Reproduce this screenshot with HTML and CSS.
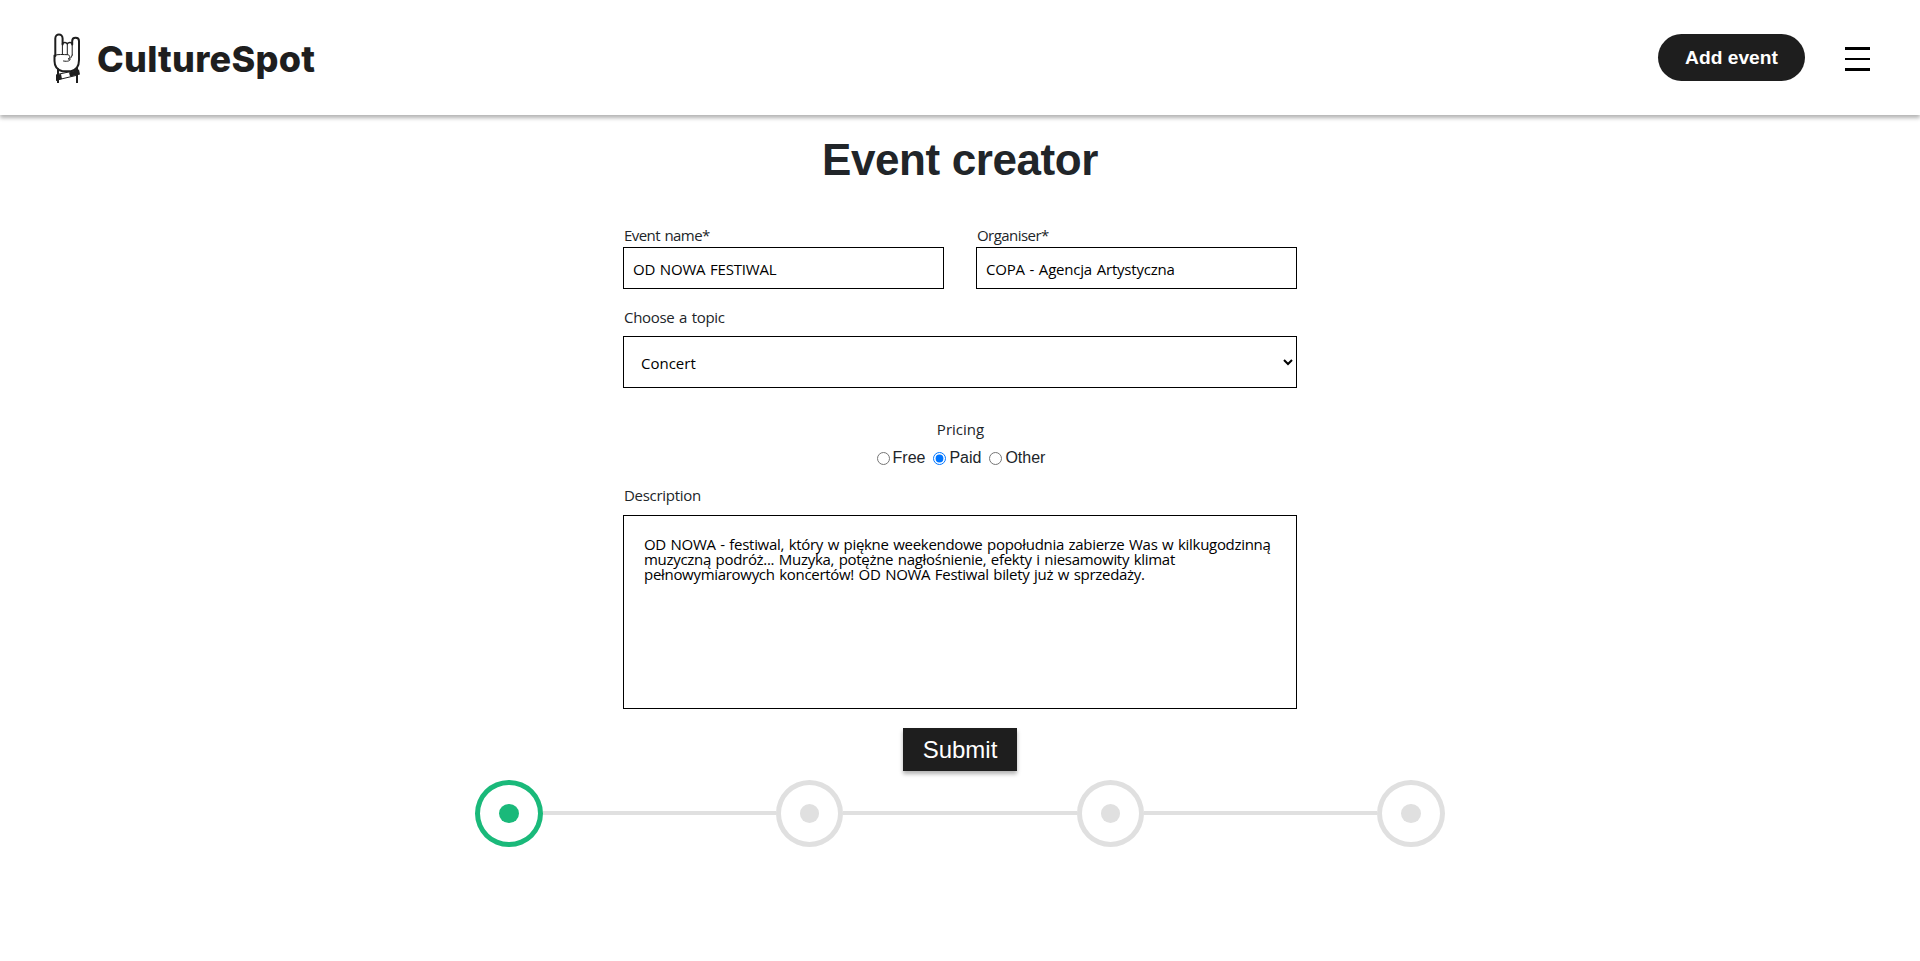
FILE: index.html
```html
<!DOCTYPE html>
<html lang="en">
<head>
<meta charset="utf-8">
<title>CultureSpot - Event creator</title>
<link rel="stylesheet" href="styles.css">
</head>
<body>
<header class="header">
  <a class="brand">
    <svg class="brand-icon" viewBox="0 0 28 52" width="28" height="52" fill="none" stroke="#1e1e1e" stroke-linejoin="round" stroke-linecap="round">
      <path stroke-width="2" d="M2.300 23V5.500C2.300 .2 9.600 .2 9.600 5.500V11.500M19.200 11.500V8C19.200 3.500 26 3.500 26 8V27C26 33 23 37 18 38.200H9.500C4 37 1.500 33 1.500 28V22.500"/>
      <path stroke-width="1.600" d="M9.600 10.500C11 9.200 13 9.200 14.300 10.800C15.600 9.200 18 9.200 19.200 10.500"/>
      <path stroke-width="1" d="M9.400 11V21.500M14.300 11V21.500M19.200 11V22M1.500 22.500C4 20.800 11 21.700 14.500 21.700C17.500 22 17.500 25.500 15 26C18.500 25 18 29.500 10.500 28M19.200 22C18.500 24 18 25 16.800 25.800"/>
      <path stroke-width="2" stroke-linecap="butt" d="M5 35.500V42M5 46V50M24 34V38M24 42V50"/>
      <path stroke-width="1" d="M4 41.500L25 37V42L4 47Z"/>
      <path fill="#1e1e1e" stroke="none" d="M3 42L8 41L9 46L3 48ZM16 39.500L26 36.500L27 41.500L17 43.500Z"/>
    </svg>
    <span class="brand-name">CultureSpot</span>
  </a>
  <nav class="actions">
    <button class="add-event">Add event</button>
    <div class="menu"><i></i><i></i><i></i></div>
  </nav>
</header>
<main class="main">
  <h1 class="title">Event creator</h1>
  <form class="form">
    <div class="row">
      <label class="field"><span class="label name-label">Event name*</span><input class="input" value="OD NOWA FESTIWAL"></label>
      <label class="field"><span class="label name-label">Organiser*</span><input class="input" value="COPA - Agencja Artystyczna"></label>
    </div>
    <span class="label topic-label">Choose a topic</span>
    <select class="select"><option>Concert</option></select>
    <span class="label pricing-label">Pricing</span>
    <div class="radios">
      <input type="radio" name="price">Free
      <input type="radio" name="price" checked>Paid
      <input type="radio" name="price">Other
    </div>
    <span class="label description-label">Description</span>
    <textarea class="textarea" spellcheck="false">OD NOWA - festiwal, który w piękne weekendowe popołudnia zabierze Was w kilkugodzinną
muzyczną podróż... Muzyka, potężne nagłośnienie, efekty i niesamowity klimat
pełnowymiarowych koncertów! OD NOWA Festiwal bilety już w sprzedaży.</textarea>
    <button class="submit" type="button">Submit</button>
  </form>
  <div class="stepper">
    <div class="step active"></div><div class="line"></div>
    <div class="step"></div><div class="line"></div>
    <div class="step"></div><div class="line"></div>
    <div class="step"></div>
  </div>
</main>
</body>
</html>
```
FILE: styles.css
```css
* { box-sizing: border-box; }
body {
  margin: 0;
  background: #fff;
  color: #212529;
  font: 16px "Liberation Sans", Arial, sans-serif;
}
.header {
  display: flex;
  justify-content: space-between;
  align-items: flex-start;
  height: 115px;
  padding: 33px 50px 0 53px;
  box-shadow: 0 3px 4px rgba(0, 0, 0, .3);
}
.brand { display: flex; gap: 16px; }
.brand-name {
  font: 800 36px/52px Inter, sans-serif;
  color: #1e1e1e;
  letter-spacing: .25px;
}
.actions { display: flex; gap: 40px; padding-top: 1px; }
.add-event {
  width: 147px;
  height: 47px;
  padding: 0;
  border: 0;
  border-radius: 24px;
  background: #1e1e1e;
  color: #fff;
  font: bold 19.2px "Liberation Sans", Arial, sans-serif;
}
.menu { display: flex; flex-direction: column; gap: 8px; width: 25px; padding-top: 13px; }
.menu i { height: 2.600px; background: #000; }
.main { display: flex; flex-direction: column; align-items: center; }
.title {
  margin: 20px 0 0;
  font-size: 44px;
  line-height: 50px;
  letter-spacing: -.4px;
}
.form { display: flex; flex-direction: column; width: 674px; margin-top: 39px; }
.row { display: grid; grid-template-columns: 321px 321px; gap: 32px; }
.field { display: flex; flex-direction: column; }
.label {
  padding-left: 1px;
  font: 15px/22px "Open Sans", "Noto Sans", sans-serif;
  letter-spacing: -.3px;
  word-spacing: 1px;
}
.name-label { margin-bottom: 1px; letter-spacing: -.55px; }
.input, .select, .textarea {
  margin: 0;
  border: 1px solid #000;
  border-radius: 0;
  background: #fff;
  color: #000;
  outline: 0;
  font: 15px "Open Sans", "Noto Sans", sans-serif;
  letter-spacing: -.2px;
  word-spacing: 1px;
}
.input { width: 100%; height: 42px; padding: 1px 9px 0; }
.topic-label { margin-top: 17px; }
.select { height: 52px; margin-top: 8px; padding: 2px 1px 0 13px; letter-spacing: 0; }
.pricing-label { margin-top: 30px; align-self: center; letter-spacing: 0; }
.radios { align-self: center; margin: 9px 3px 0 0; line-height: 18px; word-spacing: -1.500px; }
.radios input { vertical-align: -2px; }
.description-label { margin-top: 17px; }
.textarea { height: 194px; margin-top: 9px; padding: 21px 10px 0 20px; line-height: 15px; letter-spacing: -.3px; resize: none; white-space: pre; overflow: hidden; }
.submit {
  align-self: center;
  width: 114px;
  height: 43px;
  margin-top: 19px;
  padding: 0;
  border: 0;
  background: #1e1e1e;
  color: #fff;
  font: 24px "Liberation Sans", Arial, sans-serif;
  box-shadow: 0 3px 4px rgba(0, 0, 0, .3);
}
.stepper { display: flex; align-items: center; width: 970px; margin-top: 9px; }
.step {
  display: flex;
  flex: none;
  align-items: center;
  justify-content: center;
  width: 67.500px;
  height: 67px;
  border: 5px solid #e0e0e0;
  border-radius: 50%;
}
.step::before { content: ""; width: 19.500px; height: 19px; border-radius: 50%; background: #e0e0e0; }
.active { border-color: #1ab97a; }
.active::before { background: #1ab97a; }
.line { flex: 1; height: 4px; margin-top: -1px; background: #e0e0e0; }
```
